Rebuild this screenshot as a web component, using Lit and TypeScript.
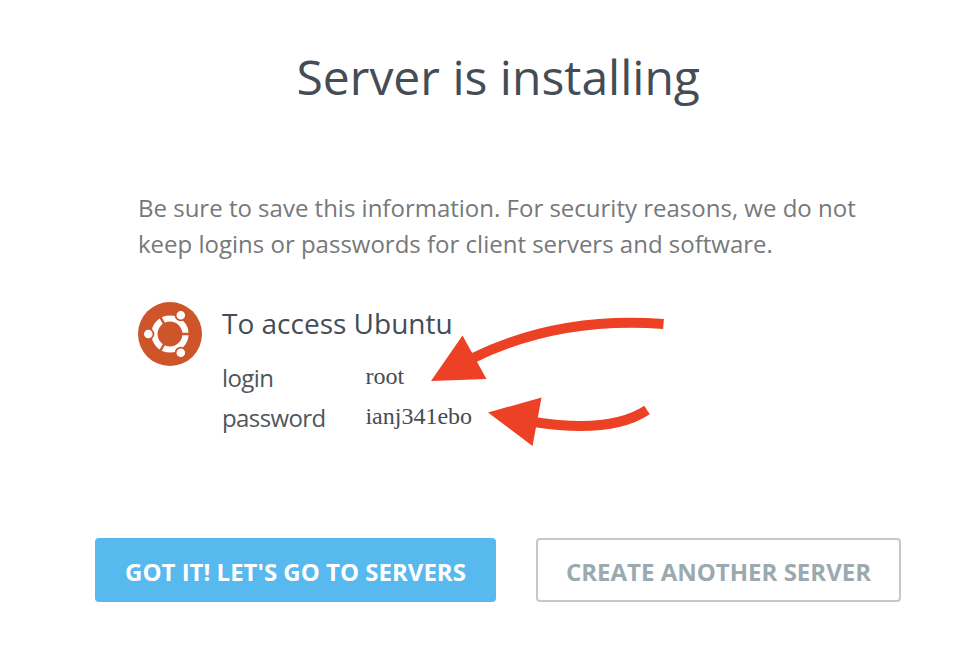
import { LitElement, html, css } from "lit";
import { customElement } from "lit/decorators.js";

@customElement("app-root")
class AppRoot extends LitElement {
  static styles = css`
    :host { display: block; position: relative; width: 960px; height: 658px; overflow: hidden; background: #fff; color: #444c55; font-family: "Open Sans", sans-serif; }
    * { box-sizing: border-box; }
    h1 { margin: 0; padding: 43px 0 0 296.5px; font-size: 48px; font-weight: 400; line-height: 68px; white-space: nowrap; }
    .note { margin: 79px 0 0 138px; font-size: 24px; line-height: 36px; color: #77787a; white-space: nowrap; }
    .access { display: flex; gap: 20px; margin: 40px 0 0 138px; height: 236px; }
    .logo { width: 64px; height: 64px; display: block; }
    h2 { margin: 0 0 14px; font-size: 28px; font-weight: 400; line-height: 42px; white-space: nowrap; }
    .creds { display: grid; grid-template-columns: 143.4px auto; font-size: 24px; line-height: 40px; margin: 0; }
    dt, dd { margin: 0; height: 40px; }
    dt { letter-spacing: -0.6px; color: #50565c; }
    dd { font-family: "Liberation Serif", serif; line-height: 36px; }
    .actions { display: flex; gap: 40px; padding-left: 95px; }
    button { height: 64px; padding: 4px 0 0; border: 0; border-radius: 4px; font: 700 24px/60px "Open Sans", sans-serif; white-space: nowrap; }
    .primary { width: 401px; background: #57b9ed; color: #fff; }
    .secondary { width: 365px; padding: 4px 0 0; line-height: 56px; background: #fff; color: #9ba9b0; border: 2px solid #c3c8cc; }
    .arrows { position: absolute; left: 0; top: 0; pointer-events: none; }
  `;
  render() {
    return html`
      <h1>Server is installing</h1>
      <div class="note">Be sure to save this information. For security reasons, we do not<br />keep logins or passwords for client servers and software.</div>
      <section class="access">
        <svg class="logo" viewBox="-32 -32 64 64">
          <circle r="32" fill="#ce5429" />
          <circle r="15.5" fill="none" stroke="#fff" stroke-width="6.2" />
          <path d="M11 0H20M-5.5 9.53L-10 17.32M-5.5 -9.53L-10 -17.32" stroke="#ce5429" stroke-width="2.4" />
          <g fill="#fff" stroke="#ce5429" stroke-width="1.8">
            <circle cx="-21.7" cy="0" r="5.2" /><circle cx="10.8" cy="-18.8" r="5.2" /><circle cx="10.8" cy="18.8" r="5.2" />
          </g>
        </svg>
        <div>
          <h2>To access Ubuntu</h2>
          <dl class="creds"><dt>login</dt><dd>root</dd><dt>password</dt><dd>ianj341ebo</dd></dl>
        </div>
      </section>
      <div class="actions">
        <button class="primary">GOT IT! LET'S GO TO SERVERS</button>
        <button class="secondary">CREATE ANOTHER SERVER</button>
      </div>
      <svg class="arrows" width="960" height="658" viewBox="0 0 960 658">
        <g fill="none" stroke="#ec4125" stroke-width="10">
          <path d="M663.5 324Q558 316 472 358.5" /><path d="M647 410Q611 434 534 422" />
        </g>
        <path fill="#ec4125" d="M431 381L462.5 335.5L486.5 379ZM488 412.5L541.5 397.5L532.5 446Z" />
      </svg>`;
  }
}
